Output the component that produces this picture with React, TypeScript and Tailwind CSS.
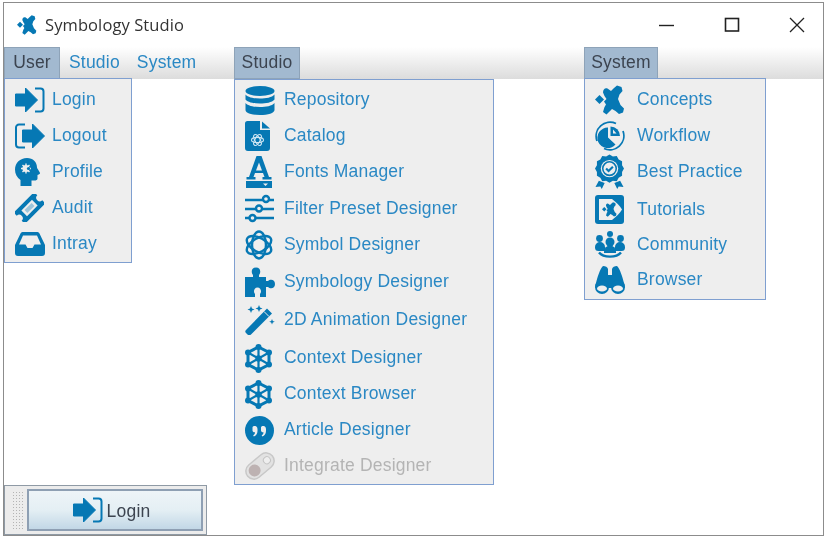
import React from "react";

const B = "#0678b4";
const BG = "#eeeeee";

function Logo({ size, color = B }: { size: number; color?: string }) {
  return (
    <svg width={size} height={size} viewBox="0 0 30 30" fill={color}>
      <path d="M0 14.500L4.500 10L9 14.500L4.500 19Z" />
      <path d="M8 7.500C8 4.500 10 2.500 12.500 3.500L16 6L19 3L22 0.500L26.500 2L27.500 6L24.500 9.500L23 14L25.500 20L29 23.500L28 27.500L24 29L20.500 26L17 24L14.500 26.500L11.500 29.500L8 27L9.500 22L11 19.500L9 16.500L11.500 14L9.500 11Z" />
    </svg>
  );
}
function LoginIcon() {
  return (
    <svg width="30" height="26" viewBox="0 0 30 26">
      <path fill={B} d="M0.500 7H10.500V1L22.500 13L10.500 25V19H0.500Z" strokeLinejoin="round" stroke={B} strokeWidth="1" />
      <path fill="none" stroke={B} strokeWidth="2" d="M20 1.500H25.500A3 3 0 0 1 28.500 4.500V21.500A3 3 0 0 1 25.500 24.500H20" />
    </svg>
  );
}
function LogoutIcon() {
  return (
    <svg width="30" height="26" viewBox="0 0 30 26">
      <path fill={B} d="M7.500 7H17.500V1L29.500 13L17.500 25V19H7.500Z" strokeLinejoin="round" stroke={B} strokeWidth="1" />
      <path fill="none" stroke={B} strokeWidth="2" d="M10 1.500H4A3 3 0 0 0 1 4.500V21.500A3 3 0 0 0 4 24.500H10" />
    </svg>
  );
}
function Head() {
  return (
    <svg width="26" height="28" viewBox="0 0 26 28">
      <path fill={B} d="M12 0C18 0 22 4 22 9.500C22 10.500 25.500 14.500 25 15.500C24.500 16.500 23 16.500 22.500 17V20.500C22.500 22 21 22.500 19.500 22.500H16.500V28H5.500V22C2 19.500 0 16 0 11.500C0 5 5 0 12 0Z" />
      <g stroke={BG} strokeWidth="1.400"><path d="M11 5.500V15.500M6 10.500H16M7.500 7L14.500 14M14.500 7L7.500 14" /></g>
      <circle cx="11" cy="10.500" r="3.600" fill={BG} />
      <circle cx="13.500" cy="10.500" r="1.600" fill={B} />
    </svg>
  );
}
function Ticket() {
  return (
    <svg width="29" height="28" viewBox="0 0 29 28">
      <g transform="rotate(-45 14.500 14)">
        <path fill={B} d="M0 6H29V10.500A3.500 3.500 0 0 0 29 17.500V22H0V17.500A3.500 3.500 0 0 0 0 10.500Z" />
        <rect x="7" y="10" width="15" height="8" fill={BG} />
        <rect x="9.500" y="12" width="10" height="4" fill={B} opacity="0.35" />
      </g>
    </svg>
  );
}
function Inbox() {
  return (
    <svg width="30" height="24" viewBox="0 0 30 24">
      <path fill={B} d="M0 13L5.500 1.500A2.500 2.500 0 0 1 8 0H22A2.500 2.500 0 0 1 24.500 1.500L30 13V21A3 3 0 0 1 27 24H3A3 3 0 0 1 0 21Z" />
      <path fill={BG} d="M4 12.500L8 3.500H22L26 12.500H19.500L17.500 16H12.500L10.500 12.500Z" />
    </svg>
  );
}
function Database() {
  return (
    <svg width="30" height="29" viewBox="0 0 30 29" fill={B}>
      <ellipse cx="15" cy="5" rx="14.500" ry="5" />
      <path d="M.5 8.500C3 11.500 9 12.500 15 12.500S27 11.500 29.500 8.500V13.500C27 16.500 21 17.500 15 17.500S3 16.500 .5 13.500Z" />
      <path d="M.5 17C3 20 9 21 15 21S27 20 29.500 17V24C29.500 27 23 29 15 29S.5 27 .5 24Z" />
    </svg>
  );
}
function Doc() {
  return (
    <svg width="25" height="30" viewBox="0 0 25 30">
      <path fill={B} d="M2.500 0H15V9H25V27A3 3 0 0 1 22 30H3A3 3 0 0 1 0 27V2.500A2.500 2.500 0 0 1 2.500 0Z" />
      <path fill={B} d="M17 0.500L25 7.500H17Z" />
      <g stroke="#cfe6f3" strokeWidth="1.100" fill="none">
        <ellipse cx="12.500" cy="19" rx="6" ry="2.600" />
        <ellipse cx="12.500" cy="19" rx="6" ry="2.600" transform="rotate(60 12.500 19)" />
        <ellipse cx="12.500" cy="19" rx="6" ry="2.600" transform="rotate(120 12.500 19)" />
      </g>
    </svg>
  );
}
function FontA() {
  return (
    <svg width="28" height="32" viewBox="0 0 28 32" fill={B}>
      <path d="M11.500 0H16.500L24 21H26.500V23.500H17.500V21H19.500L18 17H10L8.500 21H10.500V23.500H1.500V21H4ZM14 6.500L11 14.500H17Z" fillRule="evenodd" />
      <path d="M1 25H27V32H1Z" />
      <path d="M18 27.500H23L20.500 30Z" fill={BG} />
    </svg>
  );
}
function Sliders() {
  return (
    <svg width="29" height="29" viewBox="0 0 29 29" fill={BG} stroke={B} strokeWidth="2.400">
      <path d="M0 6H29M0 15H29M0 24H29" fill="none" />
      <circle cx="21" cy="5" r="3" />
      <circle cx="14" cy="14.500" r="3" />
      <circle cx="7.500" cy="24" r="3" />
    </svg>
  );
}
function Atom() {
  return (
    <svg width="28" height="30" viewBox="0 0 28 30" fill="none" stroke={B} strokeWidth="2.400">
      <ellipse cx="14" cy="15" rx="7" ry="13.500" />
      <ellipse cx="14" cy="15" rx="7" ry="13.500" transform="rotate(60 14 15)" />
      <ellipse cx="14" cy="15" rx="7" ry="13.500" transform="rotate(120 14 15)" />
    </svg>
  );
}
function Puzzle() {
  return (
    <svg width="30" height="30" viewBox="0 0 30 30" fill={B}>
      <path d="M0 10H8V8C6 6 6 0.500 11 0.500C16 0.500 16 6 14 8V10H21V14H23C25 12 30 12 30 17C30 22 25 22 23 20H21V30H15V27C17 25 16 20.500 12.500 20.500C9 20.500 8 25 10 27V30H0Z" />
    </svg>
  );
}
function Wand() {
  return (
    <svg width="30" height="30" viewBox="0 0 30 30" fill={B}>
      <path d="M1 25L22 3.500L27 8.500L6 29.500C5 30.500 3.500 30.500 2.500 29.500L1 28C0 27 0 26 1 25Z" />
      <path d="M19 6.500L24 11.500" stroke={BG} strokeWidth="1" />
      <path d="M6 1L7 3.500L9.500 4.500L7 5.500L6 8L5 5.500L2.500 4.500L5 3.500ZM14 0L15 2.500L17.500 3.500L15 4.500L14 7L13 4.500L10.500 3.500L13 2.500ZM27 14L27.800 16L29.800 16.800L27.800 17.600L27 19.600L26.200 17.600L24.200 16.800L26.200 16Z" />
    </svg>
  );
}
function Wheel() {
  return (
    <svg width="27" height="29" viewBox="0 0 27 29" fill={B} stroke={B}>
      <path d="M13.500 3 L24 8.500 L24 20.500 L13.500 26 L3 20.500 L3 8.500Z" fill="none" strokeWidth="3" />
      <path d="M13.500 3V26M3 8.500L24 20.500M24 8.500L3 20.500" strokeWidth="2.200" />
      <circle cx="13.500" cy="14.500" r="3.200" stroke="none" />
      <circle cx="13.500" cy="3" r="3" stroke="none" />
      <circle cx="13.500" cy="26" r="3" stroke="none" />
      <circle cx="3" cy="8.500" r="3" stroke="none" />
      <circle cx="24" cy="8.500" r="3" stroke="none" />
      <circle cx="3" cy="20.500" r="3" stroke="none" />
      <circle cx="24" cy="20.500" r="3" stroke="none" />
    </svg>
  );
}
function Quote() {
  return (
    <svg width="29" height="29" viewBox="0 0 29 29">
      <circle cx="14.500" cy="14.500" r="14.500" fill={B} />
      <path fill={BG} d="M7.500 11.500C7.500 10.500 8.500 10 9.500 10S12.500 10.500 12.500 13V15C12.500 18 11 19.800 8.800 20.500L8.200 19.300C9.500 18.600 10 17.500 10 16.300H9.500C8.500 16.300 7.500 15.500 7.500 14.500ZM16 11.500C16 10.500 17 10 18 10S21 10.500 21 13V15C21 18 19.500 19.800 17.300 20.500L16.700 19.300C18 18.600 18.500 17.500 18.500 16.300H18C17 16.300 16 15.500 16 14.500Z" />
    </svg>
  );
}
function Belt() {
  return (
    <svg width="30" height="30" viewBox="0 0 30 30">
      <g transform="rotate(-40 15 15)">
        <rect x="-1" y="7" width="32" height="16" rx="8" fill="#e2e2e2" stroke="#c8c8c8" strokeWidth="1.500" />
        <circle cx="8" cy="15" r="6" fill="#bdb2b2" />
        <circle cx="24" cy="15" r="3.500" fill={BG} stroke="#c4c4c4" />
      </g>
    </svg>
  );
}
function Cycle() {
  return (
    <svg width="30" height="30" viewBox="0 0 30 30" fill={B}>
      <path d="M13 6.500V16.500L20.500 23.500A10.300 10.300 0 1 1 13 6.500Z" />
      <path d="M15.500 5.500A9.500 9.500 0 0 1 25 15H15.500Z" />
      <path d="M18 8.500L21.500 12.500H18Z" fill={BG} />
      <path d="M2 20A14 14 0 0 1 21 2.500M28 10A14 14 0 0 1 9 27.500" fill="none" stroke={B} strokeWidth="1.800" />
    </svg>
  );
}
function Badge() {
  return (
    <svg width="29" height="36" viewBox="0 0 30 36" fill={B}>
      <path d="M15 0l3.500 2 4-.5 2 3.500 3.500 2 0 4 2 3.500-2 3.500 0 4-3.500 2-2 3.500-4-.5-3.500 2-3.500-2-4 .5-2-3.500-3.500-2 0-4-2-3.500 2-3.500 0-4 3.500-2 2-3.500 4 .5Z" />
      <circle cx="15" cy="14.500" r="9" fill={BG} />
      <circle cx="15" cy="14.500" r="7" fill="none" stroke={B} strokeWidth="1.600" />
      <path d="M11.500 14.500l2.500 2.500 4.500-4.500" fill="none" stroke={B} strokeWidth="2.200" />
      <path d="M4 27L10 29.500L7 35.500L5.500 33L0.500 33.500ZM26 27L20 29.500L23 35.500L24.500 33L29.500 33.500Z" />
    </svg>
  );
}
function Tutorial() {
  return (
    <svg width="29" height="29" viewBox="0 0 29 29">
      <rect width="29" height="29" rx="3" fill={B} />
      <path d="M4 4H17C21 7 25 11 27 14.500C25 18 21 22 17 25H4Z" fill={BG} />
      <g transform="translate(7 7) scale(0.5)"><Logo size={30} /></g>
    </svg>
  );
}
function Community() {
  return (
    <svg width="30" height="27" viewBox="0 0 30 27" fill={B}>
      <circle cx="15" cy="3" r="3" />
      <circle cx="4.500" cy="7.500" r="3.400" />
      <circle cx="25.500" cy="7.500" r="3.400" />
      <path d="M0 16a5 5 0 0 1 10 0v4H3.500a3.500 3.500 0 0 1-3.500-3.500ZM20 16a5 5 0 0 1 10 0v.5a3.500 3.500 0 0 1-3.500 3.500H20Z" />
      <circle cx="15" cy="11" r="4.500" />
      <path d="M9 20.500a6 6 0 0 1 12 0v1.500H9Z" />
      <path d="M4 21.500C8.500 27 21.500 27 26 21.500" fill="none" stroke={B} strokeWidth="2.400" />
    </svg>
  );
}
function Binoculars() {
  return (
    <svg width="30" height="28" viewBox="0 0 30 28" fill={B}>
      <path d="M8 0C10.500 0 12.500 1 13 3V9H17V3C17.500 1 19.500 0 22 0C25 3 27.500 11 29 17C30 19 30 21 29.500 22H.500C0 21 0 19 1 17C2.500 11 5 3 8 0Z" />
      <circle cx="7" cy="21" r="7" />
      <circle cx="23" cy="21" r="7" />
      <ellipse cx="7" cy="22.500" rx="5" ry="3" fill={BG} />
      <ellipse cx="23" cy="22.500" rx="5" ry="3" fill={BG} />
    </svg>
  );
}

type Item = { label: string; icon: React.ReactNode; row: string; off?: boolean };

const user: Item[] = [
  { label: "Login", icon: <LoginIcon />, row: "h-9" },
  { label: "Logout", icon: <LogoutIcon />, row: "h-9" },
  { label: "Profile", icon: <Head />, row: "h-9" },
  { label: "Audit", icon: <Ticket />, row: "h-9" },
  { label: "Intray", icon: <Inbox />, row: "h-9" },
];
const studio: Item[] = [
  { label: "Repository", icon: <Database />, row: "h-9" },
  { label: "Catalog", icon: <Doc />, row: "h-9" },
  { label: "Fonts Manager", icon: <FontA />, row: "h-9" },
  { label: "Filter Preset Designer", icon: <Sliders />, row: "h-[37px]" },
  { label: "Symbol Designer", icon: <Atom />, row: "h-9" },
  { label: "Symbology Designer", icon: <Puzzle />, row: "h-[37px]" },
  { label: "2D Animation Designer", icon: <Wand />, row: "h-[40px]" },
  { label: "Context Designer", icon: <Wheel />, row: "h-[36px]" },
  { label: "Context Browser", icon: <Wheel />, row: "h-9" },
  { label: "Article Designer", icon: <Quote />, row: "h-9" },
  { label: "Integrate Designer", icon: <Belt />, row: "h-9", off: true },
];
const system: Item[] = [
  { label: "Concepts", icon: <Logo size={30} />, row: "h-9" },
  { label: "Workflow", icon: <Cycle />, row: "h-9" },
  { label: "Best Practice", icon: <Badge />, row: "h-[37px]" },
  { label: "Tutorials", icon: <Tutorial />, row: "h-[39px]" },
  { label: "Community", icon: <Community />, row: "h-[32px]" },
  { label: "Browser", icon: <Binoculars />, row: "h-[39px]" },
];

function Rows({ items, iconBox }: { items: Item[]; iconBox: string }) {
  return (
    <>
      {items.map((it) => (
        <div key={it.label} className={`flex items-center ${it.row}`}>
          <span className={`flex items-center shrink-0 ${iconBox}`}>{it.icon}</span>
          <span className={it.off ? "text-[#b4b4b4]" : "text-[#2a88c4]"}>{it.label}</span>
        </div>
      ))}
    </>
  );
}

export default function App() {
  return (
    <div className="w-[826px] h-[538px] bg-white pt-[2px] pl-[3px] pr-[2px] pb-[2px] font-['Liberation_Sans',sans-serif] text-[17.5px] leading-none tracking-[0.2px] blur-[0.4px]">
      <div className="relative w-full h-full border border-[#8c8c8c] flex flex-col">
        <div className="h-[44px] shrink-0 flex items-center pl-[13px] bg-white">
          <Logo size={20} />
          <span className="ml-[8px] text-[#333333] font-['Open_Sans',sans-serif] text-[16.5px] tracking-[0.1px]">Symbology Studio</span>
          <div className="ml-auto flex items-center">
            <svg width="16" height="16" viewBox="0 0 16 16" className="mr-[49px]"><path d="M0 8.500H15" stroke="#222" strokeWidth="1.400" /></svg>
            <svg width="16" height="16" viewBox="0 0 16 16" className="mr-[49px]"><rect x="1.500" y="1.500" width="13" height="12.500" fill="none" stroke="#222" strokeWidth="1.600" /></svg>
            <svg width="16" height="16" viewBox="0 0 16 16" className="mr-[18px]"><path d="M1 1L15 15M15 1L1 15" stroke="#222" strokeWidth="1.300" /></svg>
          </div>
        </div>
        <div className="relative h-[32px] shrink-0 flex items-center bg-gradient-to-b from-white to-[#dcdcdc]">
          <div className="h-full w-[56px] flex items-center justify-center bg-[#a2b9d0] border border-[#8ea3b8] text-[#3c4450]">User</div>
          <span className="ml-[9px] text-[#2a88c4]">Studio</span>
          <span className="ml-[17px] text-[#2a88c4]">System</span>
          <div className="absolute left-[230px] top-0 h-full w-[66px] flex items-center justify-center bg-[#a2b9d0] border border-[#8ea3b8] text-[#3c4450]">Studio</div>
          <div className="absolute left-[580px] top-0 h-full w-[74px] flex items-center justify-center bg-[#a2b9d0] border border-[#8ea3b8] text-[#3c4450]">System</div>
        </div>
        <div className="relative flex-1 bg-white">
          <div className="absolute left-0 top-[-1px] w-[128px] h-[185px] flex flex-col bg-[#eeeeee] border border-[#7f9fd0] pl-[10px] pt-[3px]">
            <Rows items={user} iconBox="w-[37px]" />
          </div>
          <div className="absolute left-[230px] top-0 w-[260px] h-[406px] flex flex-col bg-[#eeeeee] border border-[#7f9fd0] pl-[10px] pt-[2px]">
            <Rows items={studio} iconBox="w-[39px]" />
          </div>
          <div className="absolute left-[580px] top-[-1px] w-[182px] h-[222px] flex flex-col bg-[#eeeeee] border border-[#7f9fd0] pl-[10px] pt-[3px]">
            <Rows items={system} iconBox="w-[42px]" />
          </div>
        </div>
        <div className="w-[203px] h-[50px] shrink-0 flex items-center border border-[#8f9aa5] bg-[#ececec] pl-[7px] pr-[3px]">
          <div className="w-[11px] h-[38px] shrink-0 bg-[radial-gradient(#b4b4b4_1px,transparent_1px)] bg-[length:3px_3px]" />
          <div className="ml-[4px] flex-1 h-[42px] flex items-center justify-center gap-[4px] pr-[7px] border-2 border-[#8e9fb3] bg-gradient-to-b from-[#eef4f8] via-[#e4eff4] to-[#c2d7e6] text-[#3c4450]">
            <LoginIcon />
            <span className="pt-[3px]">Login</span>
          </div>
        </div>
      </div>
    </div>
  );
}
